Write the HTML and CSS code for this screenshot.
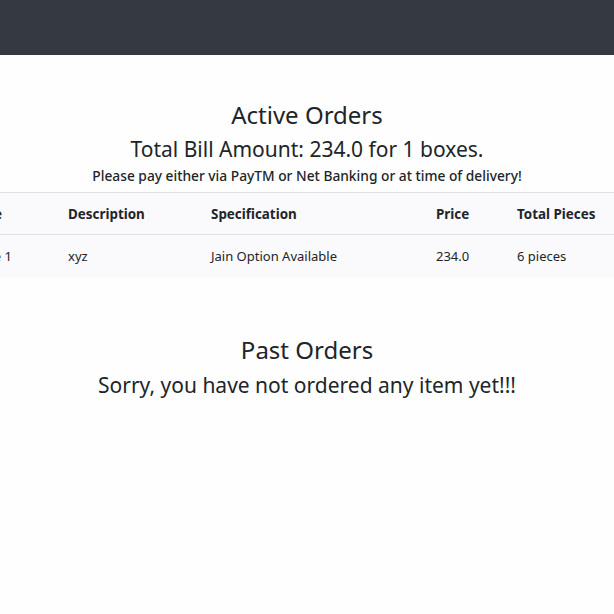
FILE: index.html
```html
<!DOCTYPE html>
<html lang="en">
<head>
<meta charset="utf-8">
<title>Orders</title>
<link rel="stylesheet" href="styles.css">
</head>
<body>
<nav class="navbar"></nav>
<main class="content">
  <section class="active">
    <h2 class="title">Active Orders</h2>
    <h3 class="bill">Total Bill Amount: 234.0 for 1 boxes.</h3>
    <p class="note">Please pay either via PayTM or Net Banking or at time of delivery!</p>
    <div class="table-wrap">
      <table class="orders">
        <colgroup>
          <col class="c-name"><col class="c-desc"><col class="c-spec"><col class="c-price"><col class="c-pieces">
        </colgroup>
        <thead>
          <tr><th>Name</th><th>Description</th><th>Specification</th><th>Price</th><th>Total Pieces</th></tr>
        </thead>
        <tbody>
          <tr><td>Name 1</td><td>xyz</td><td>Jain Option Available</td><td>234.0</td><td>6 pieces</td></tr>
        </tbody>
      </table>
    </div>
  </section>
  <section class="past">
    <h2 class="title">Past Orders</h2>
    <h3 class="bill">Sorry, you have not ordered any item yet!!!</h3>
  </section>
</main>
</body>
</html>
```
FILE: styles.css
```css
html, body {
  margin: 0;
  padding: 0;
  background: #fdfefd;
  overflow: hidden;
}
body {
  font-family: "Noto Sans", "Open Sans", sans-serif;
  color: #212529;
  width: 614px;
}
.navbar {
  height: 55px;
  background: #343a40;
}
.content {
  padding-top: 47px;
}
.title {
  margin: 0;
  font-size: 24px;
  font-weight: 400;
  line-height: 25px;
  text-align: center;
}
.bill {
  margin: 10px 0 0;
  font-size: 21px;
  font-weight: 400;
  line-height: 1.2;
  text-align: center;
}
.note {
  margin: 3px 0 0;
  font-size: 13.75px;
  font-weight: 500;
  line-height: 21px;
  text-align: center;
}
.table-wrap {
  margin-top: 6px;
  overflow: hidden;
}
.orders {
  margin-left: -100px;
  width: 740px;
  table-layout: fixed;
  border-collapse: collapse;
  background: #fafafc;
  font-size: 13px;
}
.c-name { width: 156px; }
.c-desc { width: 143px; }
.c-spec { width: 225px; }
.c-price { width: 81px; }
.c-pieces { width: 135px; }
.orders th, .orders td {
  padding: 12px;
  text-align: left;
  white-space: nowrap;
}
.orders th {
  font-weight: 700;
  font-size: 13.4px;
  border-top: 1px solid #dee2e6;
  border-bottom: 1px solid #dee2e6;
  height: 16px;
  padding-top: 12px;
  padding-bottom: 11px;
}
.orders td {
  font-weight: 400;
  height: 18px;
  padding-top: 12px;
}
.orders th:first-child, .orders td:first-child {
  text-align: right;
  padding-right: 44px;
}
.orders th:first-child {
  padding-right: 54px;
}
.past {
  padding-top: 60px;
}
.past .bill {
  margin-top: 11px;
}
```
